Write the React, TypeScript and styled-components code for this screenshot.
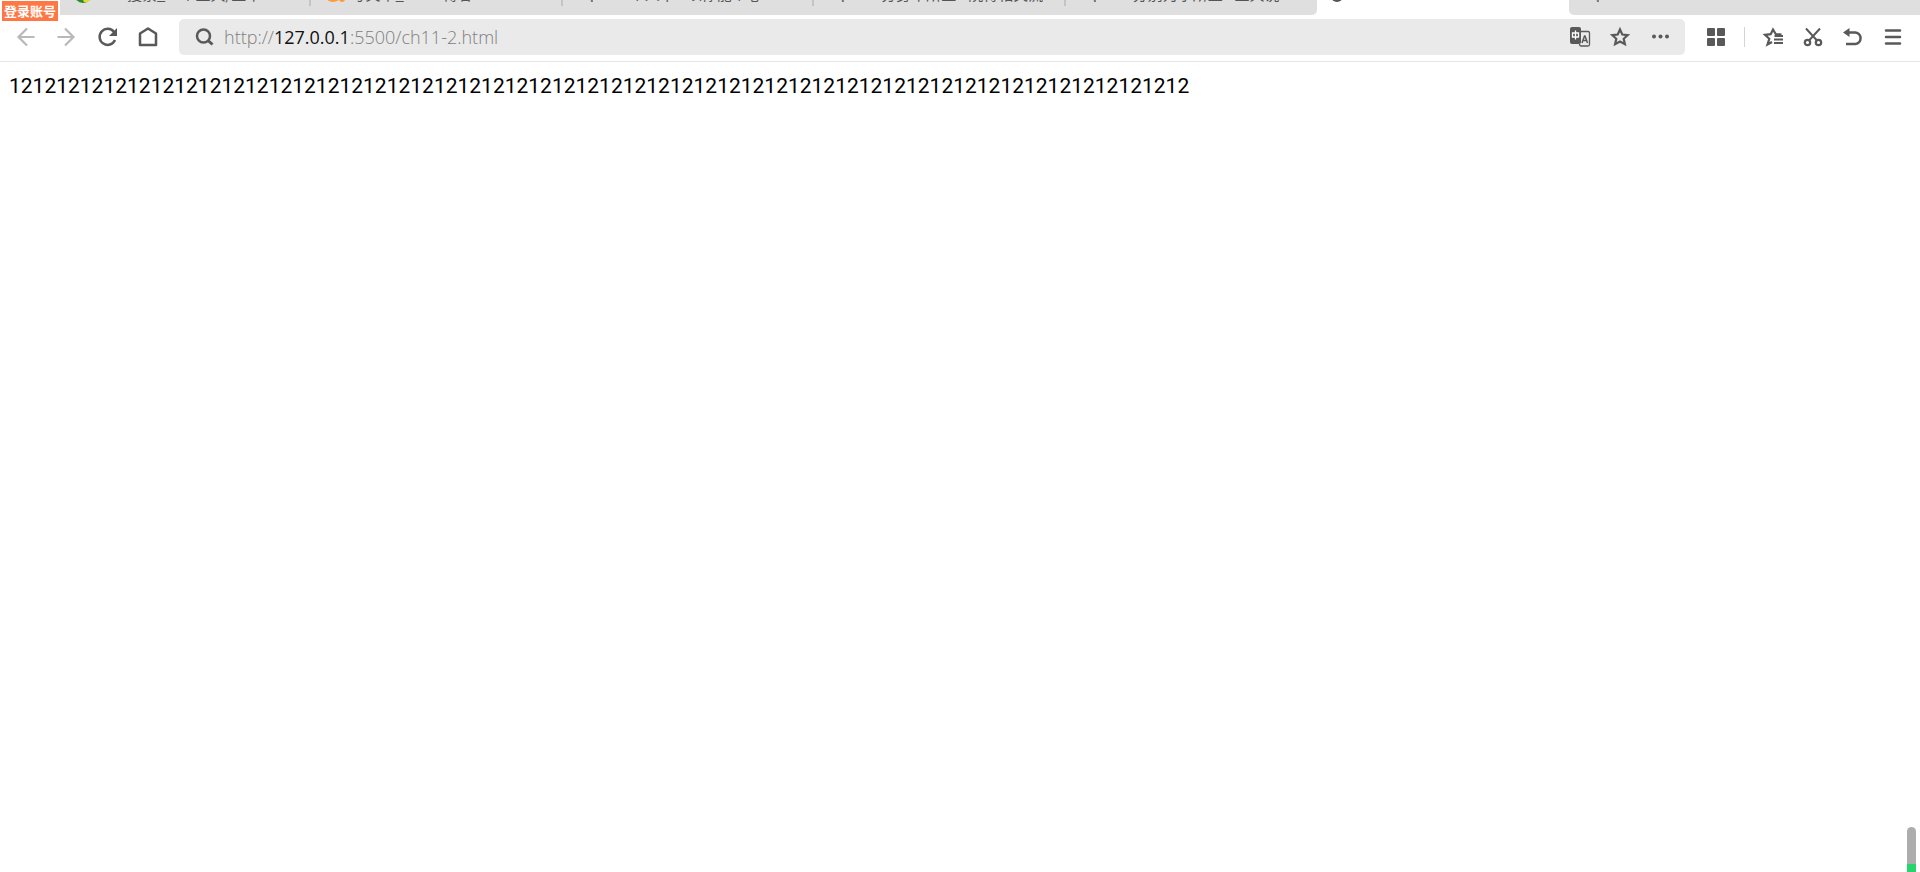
import React from "react";
import styled, { createGlobalStyle } from "styled-components";

const GlobalStyle = createGlobalStyle`
  * { box-sizing: border-box; }
  body { margin: 0; background: #fff; font-family: "Open Sans", "Noto Sans CJK SC", sans-serif; }
`;

const Window = styled.div`
  display: flex;
  flex-direction: column;
  min-height: 100vh;
  position: relative;
`;
const TabStrip = styled.nav`
  display: flex;
  height: 15px;
  padding-left: 60px;
  overflow: hidden;
  background: #fff;
`;
const Tab = styled.button<{ $active?: boolean; $round?: string }>`
  flex: 1 1 0;
  min-width: 0;
  height: 15px;
  display: flex;
  align-items: flex-start;
  gap: 4px;
  padding: 0 0 0 15px;
  border: 0;
  overflow: hidden;
  color: #555;
  text-align: left;
  background: ${(p) => (p.$active ? "#fff" : "#dfdfdf")};
  border-radius: ${(p) => p.$round || "0"};
`;
const TabFiller = styled.div`
  flex: 0 0 100px;
  background: #dfdfdf;
`;
const TabTitle = styled.span<{ $indent?: boolean }>`
  flex: 1;
  height: 15px;
  display: flex;
  align-items: flex-end;
  overflow: hidden;
  white-space: nowrap;
  font-family: "Noto Sans CJK SC", sans-serif;
  font-size: 15px;
  line-height: 20px;
  padding: 0 8px 11px ${(p) => (p.$indent ? 28 : 0)}px;
`;
const TabIcon = styled.svg`
  width: 20px;
  height: 15px;
  flex: none;
`;
const Divider = styled.i`
  width: 2px;
  height: 6px;
  flex: none;
  background: #c4c4c4;
`;
const LoginBadge = styled.button`
  position: absolute;
  left: 2px;
  top: 1px;
  width: 56px;
  height: 20px;
  padding: 0;
  border: 0;
  color: #fff;
  background: #ff7744;
  font-family: "Noto Sans CJK SC", sans-serif;
  font-size: 13px;
  font-weight: 700;
  line-height: 20px;
  white-space: nowrap;
`;
const Toolbar = styled.header`
  display: flex;
  align-items: center;
  height: 47px;
  padding: 4px 17px 6px 16px;
  border-bottom: 1px solid #e4e4e4;
`;
const Group = styled.div`
  display: flex;
  align-items: center;
  gap: 20px;
`;
const IconButton = styled.button<{ $faded?: boolean }>`
  width: 20px;
  height: 20px;
  flex: none;
  padding: 0;
  border: 0;
  background: none;
  color: ${(p) => (p.$faded ? "#b9b9b9" : "#595959")};
`;
const Glyph = styled.svg`
  display: block;
  width: 20px;
  height: 20px;
  overflow: visible;
  fill: none;
  stroke: currentColor;
  stroke-width: 2.2;
`;
const AddressBar = styled.div`
  flex: 1;
  display: flex;
  align-items: center;
  height: 36px;
  margin: 0 21px 0 23px;
  padding: 0 15px 0 16px;
  border-radius: 5px;
  background: #eaeaea;
`;
const Address = styled.div`
  flex: 1;
  margin-left: 9px;
  color: #808080;
  font-size: 18px;
  font-weight: 300;
  line-height: 24px;
`;
const Host = styled.span`
  color: #111;
  font-weight: 400;
`;
const Separator = styled.i`
  width: 1px;
  height: 20px;
  margin: 0 -2px 0 -2px;
  background: #d4d4d4;
`;
const Page = styled.main`
  flex: 1;
  padding: 10px 9px;
  color: #000;
  font-family: Roboto, "Noto Sans CJK SC", sans-serif;
  font-size: 21px;
  line-height: 28px;
`;
const ScrollThumb = styled.div`
  position: absolute;
  right: 4px;
  bottom: 0;
  width: 9px;
  height: 45px;
  border-radius: 5px 5px 0 0;
  background: linear-gradient(#adadad 0 37px, #27d56f 37px);
`;

type TabData = { icon: "leaf" | "orange" | "page" | "dot"; title: string; active?: boolean; divider?: boolean; round?: string };

const tabs: TabData[] = [
  { icon: "leaf", title: "搜索_一个主具/主不…", divider: true },
  { icon: "orange", title: "写文章_CSDN博客", divider: true },
  { icon: "page", title: "个人中 - 以你能个心", divider: true },
  { icon: "page", title: "分身不所工 - 院得相关流…", divider: true },
  { icon: "page", title: "分别为尔所工 - 工具说一…", round: "0 0 5px 0" },
  { icon: "dot", title: "", active: true },
  { icon: "page", title: "", round: "0 0 0 5px" },
];

function TabMark({ kind }: { kind: TabData["icon"] }) {
  return (
    <TabIcon viewBox="0 0 20 15" aria-hidden="true">
      {kind === "leaf" && (
        <>
          <circle cx="8" cy="-6" r="9" fill="#278c22" />
          <path d="M8 0h8l-4 2H9z" fill="#e6d92f" />
        </>
      )}
      {kind === "orange" && (
        <>
          <ellipse cx="7" cy="-3" rx="7" ry="5" fill="#ff9a35" />
          <circle cx="16" cy="-1" r="3" fill="#ff9a35" />
        </>
      )}
      {kind === "dot" && <circle cx="5" cy="-4" r="6" fill="#555" />}
      {kind === "page" && <path d="M13 -1q1 1 1 3" fill="none" stroke="#777" strokeWidth="2" />}
    </TabIcon>
  );
}

function Icon({ label, faded, children }: { label: string; faded?: boolean; children: React.ReactNode }) {
  return (
    <IconButton $faded={faded} aria-label={label}>
      <Glyph viewBox="0 0 20 20">{children}</Glyph>
    </IconButton>
  );
}

export default function App() {
  return (
    <Window>
      <GlobalStyle />
      <TabStrip>
        {tabs.map((t, i) => (
          <Tab key={i} $active={t.active} $round={t.round}>
            <TabMark kind={t.icon} />
            <TabTitle $indent={t.icon !== "orange"}>{t.title}</TabTitle>
            {t.divider && <Divider />}
          </Tab>
        ))}
        <TabFiller />
      </TabStrip>
      <LoginBadge>登录账号</LoginBadge>
      <Toolbar>
        <Group>
          <Icon label="Back" faded><path d="M18.500 10H2.500M11 1.500L2.500 10l8.500 8.500" /></Icon>
          <Icon label="Forward" faded><path d="M1.500 10h16M9 1.500l8.500 8.500L9 18.500" /></Icon>
          <Icon label="Reload">
            <path d="M18 5A8 8 0 1 0 19 13" strokeWidth="2.500" />
            <path d="M21 1v8h-8z" fill="currentColor" stroke="none" />
          </Icon>
          <Icon label="Home"><path d="M4 6.500l8-5 8 5V18H4z" strokeWidth="2.500" strokeLinejoin="round" /></Icon>
        </Group>
        <AddressBar>
          <Icon label="Search">
            <circle cx="8.500" cy="9" r="6.500" strokeWidth="2.500" />
            <path d="M13 13.500l4.500 4" strokeWidth="3" />
          </Icon>
          <Address>http://<Host>127.0.0.1</Host>:5500/ch11-2.html</Address>
          <Group>
            <Icon label="Translate">
              <rect x="0" y="0" width="11" height="17" rx="2" fill="currentColor" stroke="none" />
              <path d="M2.500 6h6v4h-6zM5.500 3.500v9" stroke="#fff" strokeWidth="1.300" />
              <path d="M11 4.500h7q1.500 0 1.500 1.500v11.500q0 1.500-1.500 1.500h-7q-1.500 0-1.500-2" strokeWidth="1.300" />
              <path d="M12 16l2.500-7h.5l2.500 7M13 13.500h4" strokeWidth="1.500" />
            </Icon>
            <Icon label="Bookmark">
              <path d="M10 2.500l2.300 5 5.400.6-4 3.700 1.200 5.400L10 14.500l-4.900 2.700 1.200-5.400-4-3.700 5.400-.6z" strokeWidth="2.200" />
            </Icon>
            <Icon label="More">
              <g fill="currentColor" stroke="none">
                <circle cx="4" cy="9.500" r="2" />
                <circle cx="10.500" cy="9.500" r="2" />
                <circle cx="17" cy="9.500" r="2" />
              </g>
            </Icon>
          </Group>
        </AddressBar>
        <Group>
          <Icon label="Extensions">
            <g fill="currentColor" stroke="none">
              <rect x="1" y="1" width="8" height="8" rx="1" />
              <rect x="11" y="1" width="8" height="8" rx="1" />
              <rect x="1" y="11" width="8" height="8" rx="1" />
              <rect x="11" y="11" width="8" height="8" rx="1" />
            </g>
          </Icon>
          <Separator />
          <Icon label="Favorites">
            <path d="M18.500 7.500l-5.800-.5L10 2.500 7.700 7.200l-5.700.6 4.300 4L4.500 17.500l4.500-2.500" strokeWidth="2.200" />
            <path d="M11.500 9H20M11 12.500h9M11 16h9" strokeWidth="2" />
          </Icon>
          <Icon label="Screenshot">
            <path d="M3 1.500l11 12M17 1.500L6 13.500" strokeWidth="2" />
            <circle cx="4.500" cy="15.500" r="2.700" />
            <circle cx="15.500" cy="15.500" r="2.700" />
          </Icon>
          <Icon label="Undo">
            <path d="M4 5.500h8.500a5.800 5.800 0 0 1 0 11.500H3" strokeWidth="2.500" />
            <path d="M0 5.500L6.500 1v9z" fill="currentColor" stroke="none" />
          </Icon>
          <Icon label="Menu"><path d="M3 3.500h14M3 10h14M3 16.500h14" strokeWidth="2.500" strokeLinecap="round" /></Icon>
        </Group>
      </Toolbar>
      <Page>{"12".repeat(50)}</Page>
      <ScrollThumb />
    </Window>
  );
}
